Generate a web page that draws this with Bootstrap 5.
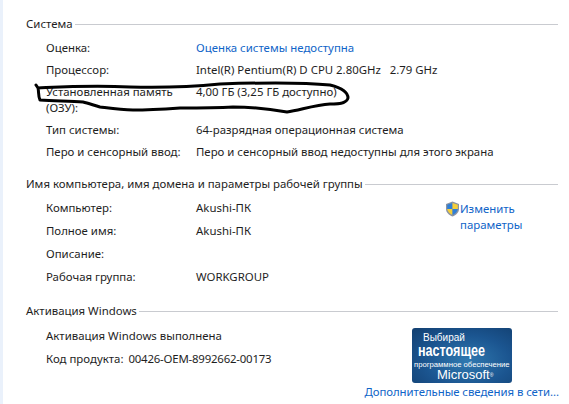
<!DOCTYPE html>
<html lang="ru">
<head>
<meta charset="utf-8">
<link href="https://cdn.jsdelivr.net/npm/bootstrap@5.3.0/dist/css/bootstrap.min.css" rel="stylesheet">
<style>
html,body{height:100%;}
body{margin:0;background:#fff;color:#1e1e1e;font-family:"Noto Sans","Open Sans",sans-serif;font-size:11.42px;line-height:16px;overflow:hidden;}
.sheet{position:relative;width:569px;height:404px;border-left:3px solid #eaf1fb;padding:16px 11px 0 23px;}
.sec-head{display:flex;align-items:center;gap:2px;height:16px;}
.sec-head::after{content:"";flex:1;height:1px;background:#c9cbd0;}
.sec-rows{padding-left:20px;}
.info-row{display:flex;margin-bottom:7px;white-space:pre-wrap;}
.rows-tight .info-row{margin-bottom:6px;}
.info-key{width:150px;flex:none;}
.win-link{color:#0f64c8;text-decoration:none;}
.sec-two{margin-top:16px;}
.sec-three{margin-top:11px;}
.rows-a{margin-top:8px;}
.rows-c{margin-top:9px;}
.two-wrap{display:flex;}
.two-wrap .sec-rows{flex:1;}
.change-box{display:flex;width:90px;margin:9px 23px 0 0;}
.change-box svg{flex:none;}
.act-wrap{display:flex;}
.act-wrap .sec-rows{flex:1;}
.code-num{letter-spacing:-.2px;margin-left:5px;}
.ms-badge{width:100px;height:55px;margin:9px 46px 0 0;border-radius:3px;background:radial-gradient(ellipse at 55% 60%,#2f79b0 0%,#1b5590 55%,#123f70 100%);color:#fff;font-family:"Liberation Sans",sans-serif;padding-top:5px;overflow:hidden;}
.ms-a{font-size:10px;line-height:10px;padding-left:11px;}
.ms-b{font-size:17px;line-height:15px;font-weight:700;padding-left:6px;white-space:nowrap;}
.ms-b span{display:inline-block;transform:scaleX(.74);transform-origin:left center;}
.ms-c{font-size:7.700px;line-height:9px;margin-top:2px;padding-left:2px;white-space:nowrap;}
.ms-d{font-size:13px;line-height:11px;padding-left:25px;white-space:nowrap;}
.ms-d sup{font-size:5px;}
.more-row{display:flex;justify-content:flex-end;margin:1px -1px 0 0;letter-spacing:-.06px;}
.ink{position:absolute;left:-3px;top:0;pointer-events:none;}
</style>
</head>
<body>
<div class="sheet">
  <div class="sec-head">Система</div>
  <div class="sec-rows rows-a rows-tight">
    <div class="info-row"><div class="info-key">Оценка:</div><a class="win-link" href="#">Оценка системы недоступна</a></div>
    <div class="info-row"><div class="info-key">Процессор:</div><div>Intel(R) Pentium(R) D CPU 2.80GHz   2.79 GHz</div></div>
    <div class="info-row"><div class="info-key">Установленная память (ОЗУ):</div><div>4,00 ГБ (3,25 ГБ доступно)</div></div>
    <div class="info-row"><div class="info-key">Тип системы:</div><div>64-разрядная операционная система</div></div>
    <div class="info-row"><div class="info-key">Перо и сенсорный ввод:</div><div>Перо и сенсорный ввод недоступны для этого экрана</div></div>
  </div>
  <div class="sec-head sec-two">Имя компьютера, имя домена и параметры рабочей группы</div>
  <div class="two-wrap">
    <div class="sec-rows rows-a">
      <div class="info-row"><div class="info-key">Компьютер:</div><div>Akushi-ПК</div></div>
      <div class="info-row"><div class="info-key">Полное имя:</div><div>Akushi-ПК</div></div>
      <div class="info-row"><div class="info-key">Описание:</div><div></div></div>
      <div class="info-row"><div class="info-key">Рабочая группа:</div><div>WORKGROUP</div></div>
    </div>
    <div class="change-box">
      <svg width="15" height="16" viewBox="0 0 15 16"><path d="M7.500 .5 14 3v5c0 3.500-3 6-6.500 7.500C4 14 1 11.500 1 8V3z" fill="#8a93a3"/><path d="M7.500 2 7.500 8H2.200V3.800z" fill="#2f7fd6"/><path d="M7.500 2 12.800 3.800V8H7.500z" fill="#f4cf3a"/><path d="M2.200 8H7.500v6C5 13 2.600 11 2.200 8z" fill="#f4cf3a"/><path d="M7.500 8h5.300C12.400 11 10 13 7.500 14z" fill="#2f7fd6"/></svg>
      <a class="win-link" href="#">Изменить параметры</a>
    </div>
  </div>
  <div class="sec-head sec-three">Активация Windows</div>
  <div class="act-wrap">
    <div class="sec-rows rows-c">
      <div class="info-row">Активация Windows выполнена</div>
      <div class="info-row"><span>Код продукта:</span><span class="code-num">00426-OEM-8992662-00173</span></div>
    </div>
    <div class="ms-badge">
      <div class="ms-a">Выбирай</div>
      <div class="ms-b"><span>настоящее</span></div>
      <div class="ms-c">программное обеспечение</div>
      <div class="ms-d">Microsoft<sup>®</sup></div>
    </div>
  </div>
  <div class="more-row"><a class="win-link" href="#">Дополнительные сведения в сети...</a></div>
  <svg class="ink" width="569" height="404" viewBox="0 0 569 404"><path d="M36 85 38 88C60 87 90 85 130 87C165 88 190 87 220 84C250 83 300 82 330 85C342 88 348 93 348 98C347 102 343 104 330 104C315 105 300 110 287 112C270 109 250 107 233 107C215 108 200 108 180 108C165 109 150 110 133 110C120 110 108 108 100 107C93 105 88 103 83 102C70 101 55 101 40 100C38 96 39 92 38 88" fill="none" stroke="#000" stroke-width="3" stroke-linecap="round" stroke-linejoin="round"/></svg>
</div>
</body>
</html>
